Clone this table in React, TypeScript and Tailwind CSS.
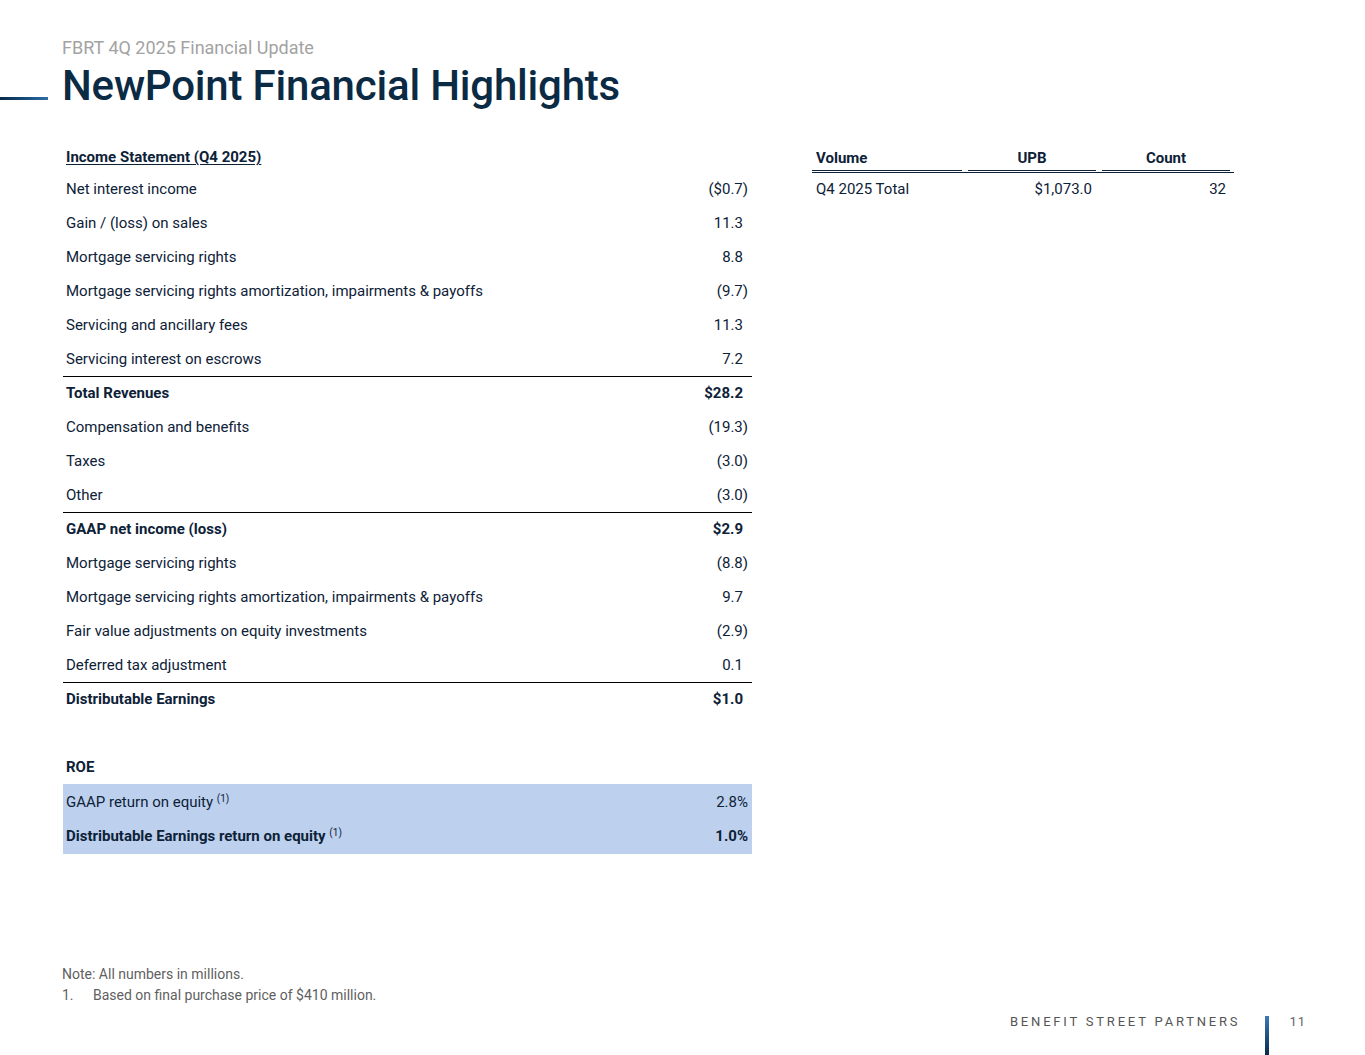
import React from "react"

type Row = { label: string; value: string; bold?: boolean; line?: boolean; neg?: boolean }

const rows: Row[] = [
    { label: "Net interest income", value: "($0.7)", neg: true },
    { label: "Gain / (loss) on sales", value: "11.3" },
    { label: "Mortgage servicing rights", value: "8.8" },
    { label: "Mortgage servicing rights amortization, impairments & payoffs", value: "(9.7)", neg: true },
    { label: "Servicing and ancillary fees", value: "11.3" },
    { label: "Servicing interest on escrows", value: "7.2" },
    { label: "Total Revenues", value: "$28.2", bold: true, line: true },
    { label: "Compensation and benefits", value: "(19.3)", neg: true },
    { label: "Taxes", value: "(3.0)", neg: true },
    { label: "Other", value: "(3.0)", neg: true },
    { label: "GAAP net income (loss)", value: "$2.9", bold: true, line: true },
    { label: "Mortgage servicing rights", value: "(8.8)", neg: true },
    { label: "Mortgage servicing rights amortization, impairments & payoffs", value: "9.7" },
    { label: "Fair value adjustments on equity investments", value: "(2.9)", neg: true },
    { label: "Deferred tax adjustment", value: "0.1" },
    { label: "Distributable Earnings", value: "$1.0", bold: true, line: true },
]

export default function App() {
    return (
        <div className="w-[1365px] h-[1055px] bg-white flex flex-col text-[#0d2137] font-['Roboto',sans-serif] overflow-hidden">
            {/* Header */}
            <header className="pt-[37px]">
                <p className="pl-[62px] text-[18px] leading-[22px] text-[#a3a3a3]">FBRT 4Q 2025 Financial Update</p>
                <div className="flex items-start mt-[3px]">
                    <div className="w-[48px] h-[3px] mt-[35px] bg-gradient-to-r from-[#0b2a4a] via-[#154a7a] to-[#2f6ea6]" />
                    <h1 className="ml-[14px] text-[42px] leading-[48px] font-medium tracking-[-0.2px] text-[#0b2a44]">NewPoint Financial Highlights</h1>
                </div>
            </header>

            <main className="flex items-start pt-[32px]">
                {/* Income statement */}
                <section className="ml-[63px] w-[689px] text-[15px]">
                    <div className="h-[30px] flex items-center pl-[3px] pt-[1px]">
                        <span className="font-bold underline underline-offset-2">Income Statement (Q4 2025)</span>
                    </div>
                    {rows.map((r, i) => (
                        <div
                            key={i}
                            className={`h-[34px] flex items-center justify-between pl-[3px] ${r.line ? "border-t border-black" : ""} ${r.bold ? "font-bold" : ""}`}
                        >
                            <span>{r.label}</span>
                            <span className={r.neg ? "pr-[4px]" : "pr-[9px]"}>{r.value}</span>
                        </div>
                    ))}
                    <div className="h-[34px]" />
                    <div className="h-[34px] flex items-center pl-[3px] font-bold">ROE</div>
                    <div className="bg-[#bdd1ef] py-[1px]">
                        <div className="h-[34px] flex items-center justify-between pl-[3px]">
                            <span>GAAP return on equity <sup className="text-[10px]">(1)</sup></span>
                            <span className="pr-[4px]">2.8%</span>
                        </div>
                        <div className="h-[34px] flex items-center justify-between pl-[3px] font-bold">
                            <span>Distributable Earnings return on equity <sup className="text-[10px] font-normal">(1)</sup></span>
                            <span className="pr-[4px]">1.0%</span>
                        </div>
                    </div>
                </section>

                {/* Volume */}
                <section className="ml-[60px] w-[422px] text-[15px]">
                    <div className="grid grid-cols-[150px_128px_128px] gap-x-[6px] h-[27px] pt-[5px]">
                        <div className="border-b-[1.5px] border-[#0d2137] pl-[4px] font-bold">Volume</div>
                        <div className="border-b-[1.5px] border-[#0d2137] text-center font-bold">UPB</div>
                        <div className="border-b-[1.5px] border-[#0d2137] text-center font-bold">Count</div>
                    </div>
                    <div className="mt-[3px] border-t-[1.5px] border-[#0d2137]" />
                    <div className="grid grid-cols-[150px_128px_128px] gap-x-[6px] h-[32px] items-center">
                        <div className="pl-[4px]">Q4 2025 Total</div>
                        <div className="text-right pr-[4px]">$1,073.0</div>
                        <div className="text-right pr-[4px]">32</div>
                    </div>
                </section>
            </main>

            {/* Notes */}
            <div className="mt-auto pl-[62px] text-[14px] leading-[21px] text-[#5f5f5f]">
                <p>Note: All numbers in millions.</p>
                <p className="flex">
                    <span className="w-[31px]">1.</span>
                    <span>Based on final purchase price of $410 million.</span>
                </p>
            </div>

            {/* Footer */}
            <footer className="flex justify-end items-start h-[39px] mt-[10px] pr-[59px]">
                <span className="mt-[-4px] text-[13px] tracking-[2.8px] text-[#555555]">BENEFIT STREET PARTNERS</span>
                <div className="ml-[25px] w-[4px] h-full bg-gradient-to-b from-[#3d7ab8] to-[#0b2a4a]" />
                <span className="ml-[20px] mt-[-4px] text-[13px] tracking-[1px] text-[#666666]">11</span>
            </footer>
        </div>
    )
}
